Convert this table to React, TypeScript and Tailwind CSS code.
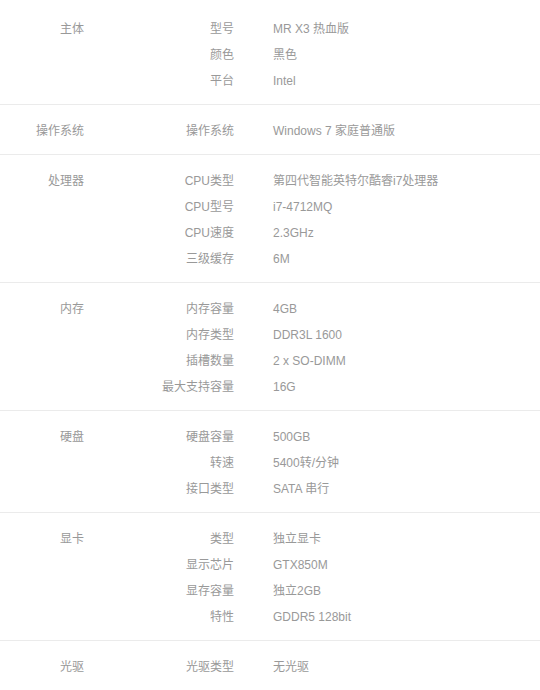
import React from "react";

type Group = { title: string; rows: [string, string][] };

const groups: Group[] = [
  { title: "主体", rows: [["型号", "MR X3 热血版"], ["颜色", "黑色"], ["平台", "Intel"]] },
  { title: "操作系统", rows: [["操作系统", "Windows 7 家庭普通版"]] },
  {
    title: "处理器",
    rows: [
      ["CPU类型", "第四代智能英特尔酷睿i7处理器"],
      ["CPU型号", "i7-4712MQ"],
      ["CPU速度", "2.3GHz"],
      ["三级缓存", "6M"],
    ],
  },
  {
    title: "内存",
    rows: [
      ["内存容量", "4GB"],
      ["内存类型", "DDR3L 1600"],
      ["插槽数量", "2 x SO-DIMM"],
      ["最大支持容量", "16G"],
    ],
  },
  { title: "硬盘", rows: [["硬盘容量", "500GB"], ["转速", "5400转/分钟"], ["接口类型", "SATA 串行"]] },
  {
    title: "显卡",
    rows: [
      ["类型", "独立显卡"],
      ["显示芯片", "GTX850M"],
      ["显存容量", "独立2GB"],
      ["特性", "GDDR5 128bit"],
    ],
  },
  { title: "光驱", rows: [["光驱类型", "无光驱"]] },
];

export default function App() {
  return (
    <div
      className="w-[540px] h-[690px] overflow-hidden bg-white pt-[3px] text-[12px] text-[#999]"
      style={{ fontFamily: '"Liberation Sans", "Noto Sans CJK SC", sans-serif' }}
    >
      {groups.map((g, gi) => (
        <div
          key={g.title}
          className={`flex pt-[13px] pb-[10px] ${gi < groups.length - 1 ? "border-b border-[#ebebeb]" : ""}`}
        >
          <div className="w-[84px] shrink-0 text-right leading-[26px]">{g.title}</div>
          <div className="flex flex-col">
            {g.rows.map(([k, v]) => (
              <div key={k} className="flex leading-[26px] h-[26px]">
                <div className="w-[150px] text-right">{k}</div>
                <div className="pl-[39px]">{v}</div>
              </div>
            ))}
          </div>
        </div>
      ))}
    </div>
  );
}
